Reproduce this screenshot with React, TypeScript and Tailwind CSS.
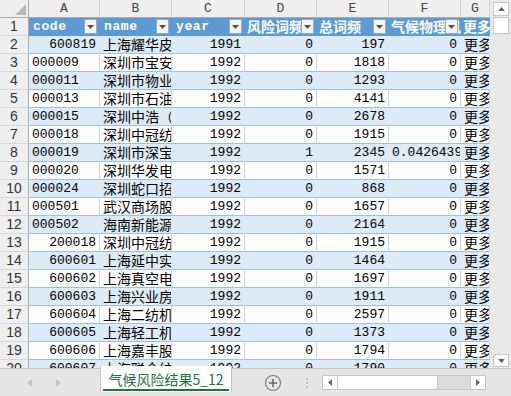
import React from "react";

type R = { c: string; cn: boolean; name: string; y: string; d: string; e: string; f: string };

const data: R[] = [
  { c: "600819", cn: true, name: "上海耀华皮鞋", y: "1991", d: "0", e: "197", f: "0" },
  { c: "000009", cn: false, name: "深圳市宝安", y: "1992", d: "0", e: "1818", f: "0" },
  { c: "000011", cn: false, name: "深圳市物业", y: "1992", d: "0", e: "1293", f: "0" },
  { c: "000013", cn: false, name: "深圳市石油", y: "1992", d: "0", e: "4141", f: "0" },
  { c: "000015", cn: false, name: "深圳中浩（集团）", y: "1992", d: "0", e: "2678", f: "0" },
  { c: "000018", cn: false, name: "深圳中冠纺织", y: "1992", d: "0", e: "1915", f: "0" },
  { c: "000019", cn: false, name: "深圳市深宝", y: "1992", d: "1", e: "2345", f: "0.04264392" },
  { c: "000020", cn: false, name: "深圳华发电子", y: "1992", d: "0", e: "1571", f: "0" },
  { c: "000024", cn: false, name: "深圳蛇口招商", y: "1992", d: "0", e: "868", f: "0" },
  { c: "000501", cn: false, name: "武汉商场股份", y: "1992", d: "0", e: "1657", f: "0" },
  { c: "000502", cn: false, name: "海南新能源", y: "1992", d: "0", e: "2164", f: "0" },
  { c: "200018", cn: true, name: "深圳中冠纺织", y: "1992", d: "0", e: "1915", f: "0" },
  { c: "600601", cn: true, name: "上海延中实业", y: "1992", d: "0", e: "1464", f: "0" },
  { c: "600602", cn: true, name: "上海真空电子", y: "1992", d: "0", e: "1697", f: "0" },
  { c: "600603", cn: true, name: "上海兴业房产", y: "1992", d: "0", e: "1911", f: "0" },
  { c: "600604", cn: true, name: "上海二纺机", y: "1992", d: "0", e: "2597", f: "0" },
  { c: "600605", cn: true, name: "上海轻工机械", y: "1992", d: "0", e: "1373", f: "0" },
  { c: "600606", cn: true, name: "上海嘉丰股份", y: "1992", d: "0", e: "1794", f: "0" },
  { c: "600607", cn: true, name: "上海联合纺织", y: "1992", d: "0", e: "1790", f: "0" },
];

const W = ["w-[71px]", "w-[72px]", "w-[73px]", "w-[72px]", "w-[72px]", "w-[72px]", "w-[29px]"];
const LETTERS = ["A", "B", "C", "D", "E", "F", "G"];

const MONO = "font-['Liberation_Mono','Noto_Sans_CJK_SC',monospace]";
const CJK = "font-['Noto_Sans_CJK_SC',sans-serif]";

function Tri() {
  return (
    <svg width="7" height="4" viewBox="0 0 7 4">
      <path d="M0 0H7L3.5 4Z" fill="#555555" />
    </svg>
  );
}

function Filter() {
  return (
    <div className="absolute right-[3px] top-[1px] w-[13px] h-[15px] bg-[#f4f4f4] border border-[#a6a6a6] flex items-center justify-center">
      <Tri />
    </div>
  );
}

function RowNum({ n }: { n: number }) {
  return (
    <div className="w-[29px] h-[18px] shrink-0 bg-[#efefef] border-r border-r-[#ababab] border-b border-b-[#d6d6d6] text-center text-[14px] leading-[17px] text-[#333] font-['Liberation_Sans',sans-serif]">
      {n}
    </div>
  );
}

function Cell({
  i,
  band,
  align,
  cjk,
  children,
}: {
  i: number;
  band: boolean;
  align: "l" | "r";
  cjk?: boolean;
  children: React.ReactNode;
}) {
  const base = `${W[i]} h-[18px] shrink-0 overflow-hidden whitespace-nowrap border-r border-b border-b-[#9bc2e6] text-black`;
  const bg = band ? "bg-[#ddebf7] border-r-[#ddebf7]" : "bg-white border-r-[#d4d4d4]";
  const al = align === "r" ? "text-right pr-[3px]" : "text-left pl-[3px]";
  const font = cjk ? `${CJK} text-[14px] leading-[17px]` : `${MONO} text-[13px] leading-[18px]`;
  return <div className={`${base} ${bg} ${al} ${font}`}>{children}</div>;
}

function HeadCell({ i, text, cjk, filter }: { i: number; text: string; cjk?: boolean; filter?: boolean }) {
  const font = cjk
    ? `${CJK} text-[14px] leading-[17px] font-bold pl-[2px]`
    : `${MONO} text-[13px] leading-[18px] font-bold tracking-[0.6px] pl-[4px]`;
  return (
    <div className={`${W[i]} h-[18px] shrink-0 relative overflow-hidden whitespace-nowrap bg-[#5b9bd5] text-white ${font}`}>
      {text}
      {filter && <Filter />}
    </div>
  );
}

function VScroll() {
  return (
    <div className="w-[21px] h-[368px] shrink-0 bg-[#e9e9e9] flex flex-col pl-[3px] pt-[2px] pb-[1px]">
      <div className="w-[16px] h-[14px] bg-white border border-[#c6c6c6] flex items-center justify-center">
        <svg width="7" height="4" viewBox="0 0 7 4">
          <path d="M0 4H7L3.5 0Z" fill="#666" />
        </svg>
      </div>
      <div className="w-[16px] h-[17px] mt-[1px] bg-white border border-[#c6c6c6]" />
      <div className="flex-1" />
      <div className="w-[16px] h-[13px] bg-white border border-[#c6c6c6] flex items-center justify-center">
        <svg width="7" height="4" viewBox="0 0 7 4">
          <path d="M0 0H7L3.5 4Z" fill="#666" />
        </svg>
      </div>
    </div>
  );
}

function TabBar() {
  return (
    <div className="h-[28px] flex items-center bg-[#e6e6e6] border-t border-t-[#c6c6c6] relative">
      <div className="w-[100px] h-full flex items-center">
        <svg className="ml-[27px]" width="5" height="8" viewBox="0 0 5 8">
          <path d="M5 0V8L0 4Z" fill="#c4c4c4" />
        </svg>
        <svg className="ml-[24px]" width="5" height="8" viewBox="0 0 5 8">
          <path d="M0 0V8L5 4Z" fill="#c4c4c4" />
        </svg>
      </div>
      <div className="w-[132px] h-[26px] -mt-[3px] self-start bg-white border-l border-r border-[#c6c6c6] relative flex items-center justify-center">
        <span className={`${CJK} text-[14px] leading-[20px] text-[#217346]`}>气候风险结果5_12</span>
        <div className="absolute left-[2px] right-[2px] bottom-[1px] h-[2px] bg-[#217346]" />
      </div>
      <svg className="ml-[32px]" width="18" height="18" viewBox="0 0 18 18">
        <circle cx="9" cy="9" r="7.5" fill="none" stroke="#7b7b7b" strokeWidth="1.2" />
        <path d="M9 5V13M5 9H13" stroke="#6a6a6a" strokeWidth="1.6" />
      </svg>
      <div className="ml-[24px] flex flex-col gap-[2px]">
        <div className="w-[2px] h-[2px] bg-[#c2c2c2]" />
        <div className="w-[2px] h-[2px] bg-[#c2c2c2]" />
        <div className="w-[2px] h-[2px] bg-[#c2c2c2]" />
      </div>
      <div className="ml-[14px] w-[164px] h-[15px] flex border border-[#c6c6c6] bg-[#dcdcdc]">
        <div className="w-[15px] h-full bg-white border-r border-[#c6c6c6] flex items-center justify-center">
          <svg width="4" height="7" viewBox="0 0 4 7">
            <path d="M4 0V7L0 3.5Z" fill="#666" />
          </svg>
        </div>
        <div className="w-[100px] h-full bg-white border-r border-[#c6c6c6]" />
        <div className="flex-1" />
        <div className="w-[15px] h-full bg-white border-l border-[#c6c6c6] flex items-center justify-center">
          <svg width="4" height="7" viewBox="0 0 4 7">
            <path d="M0 0V7L4 3.5Z" fill="#666" />
          </svg>
        </div>
      </div>
    </div>
  );
}

export default function App() {
  return (
    <div className="w-[511px] h-[396px] overflow-hidden flex flex-col bg-white">
      <div className="flex h-[368px] overflow-hidden">
        <div className="w-[490px] h-[368px] overflow-hidden shrink-0">
          {/* column letters */}
          <div className="flex h-[18px]">
            <div className="w-[29px] h-[18px] shrink-0 bg-[#efefef] border-r border-b border-[#ababab] relative">
              <svg className="absolute right-[2px] bottom-[2px]" width="11" height="11" viewBox="0 0 11 11">
                <path d="M11 0V11H0Z" fill="#b8b8b8" />
              </svg>
            </div>
            {LETTERS.map((l, i) => (
              <div
                key={l}
                className={`${W[i]} h-[18px] shrink-0 bg-[#efefef] border-r border-r-[#d0d0d0] border-b border-b-[#ababab] text-center text-[13px] leading-[18px] text-[#444] ${MONO}`}
              >
                {l}
              </div>
            ))}
          </div>
          {/* header row */}
          <div className="flex h-[18px]">
            <RowNum n={1} />
            <HeadCell i={0} text="code" filter />
            <HeadCell i={1} text="name" filter />
            <HeadCell i={2} text="year" filter />
            <HeadCell i={3} text="风险词频" cjk filter />
            <HeadCell i={4} text="总词频" cjk filter />
            <HeadCell i={5} text="气候物理风险" cjk filter />
            <HeadCell i={6} text="更多信息" cjk />
          </div>
          {data.map((r, idx) => {
            const n = idx + 2;
            const band = n % 2 === 0;
            return (
              <div key={n} className="flex h-[18px]">
                <RowNum n={n} />
                <Cell i={0} band={band} align={r.cn ? "r" : "l"}>
                  {r.c}
                </Cell>
                <Cell i={1} band={band} align="l" cjk>
                  {r.name}
                </Cell>
                <Cell i={2} band={band} align="r">
                  {r.y}
                </Cell>
                <Cell i={3} band={band} align="r">
                  {r.d}
                </Cell>
                <Cell i={4} band={band} align="r">
                  {r.e}
                </Cell>
                <Cell i={5} band={band} align={r.f.length > 3 ? "l" : "r"}>
                  {r.f}
                </Cell>
                <Cell i={6} band={band} align="l" cjk>
                  更多信息
                </Cell>
              </div>
            );
          })}
        </div>
        <VScroll />
      </div>
      <TabBar />
    </div>
  );
}
